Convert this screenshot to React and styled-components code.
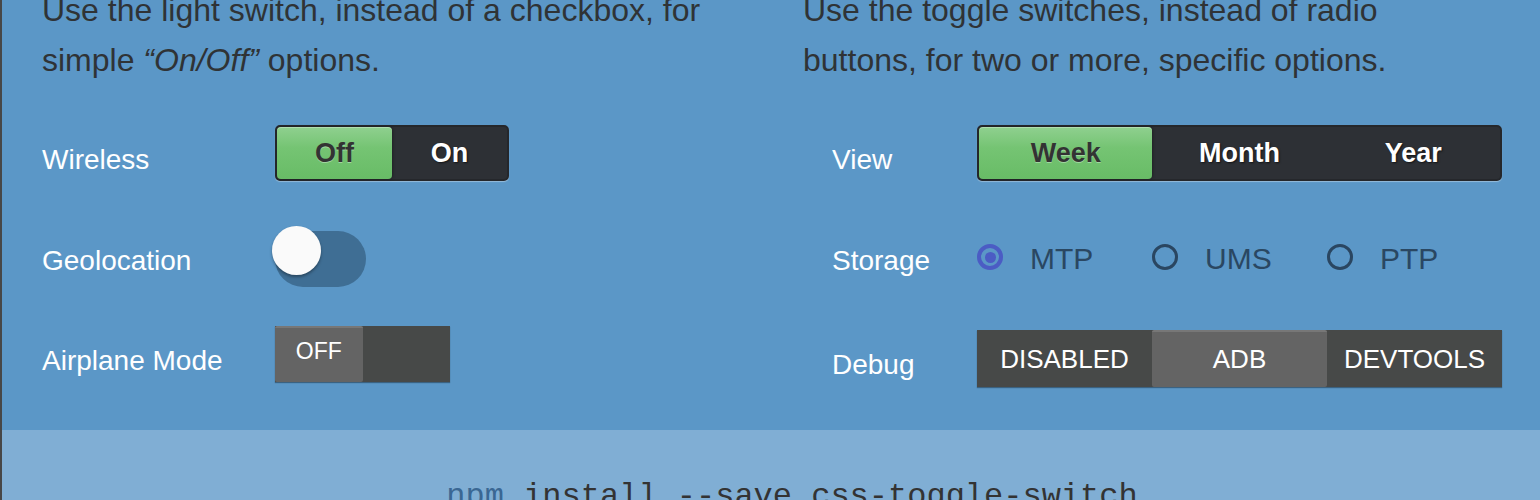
import React, { useState } from 'react';
import styled, { createGlobalStyle } from 'styled-components';

const GlobalStyle = createGlobalStyle`
    html, body {
        margin: 0;
        padding: 0;
        background: #5b97c7;
        overflow: hidden;
    }
    body {
        font-family: "Liberation Sans", Arial, sans-serif;
    }
`;

const Page = styled.div`
    width: 1540px;
    height: 500px;
    box-sizing: border-box;
    border-left: 2px solid #474747;
    display: flex;
    flex-direction: column;
    overflow: hidden;
`;

const Columns = styled.div`
    display: grid;
    grid-template-columns: 801px 1fr;
    height: 430px;
    background: #5b97c7;
    flex-shrink: 0;
`;

const Column = styled.div`
    padding-left: ${p => p.$pad}px;
    display: flex;
    flex-direction: column;
`;

const Lead = styled.p`
    margin: -15px 0 0;
    max-width: ${p => p.$max}px;
    font-size: 32px;
    line-height: 50px;
    color: #2f3336;
    em { font-style: italic; }
`;

const Row = styled.div`
    display: flex;
    align-items: center;
    height: ${p => p.$h || 56}px;
    margin-top: ${p => p.$mt}px;
`;

const Label = styled.div`
    width: ${p => p.$w}px;
    padding-left: ${p => p.$indent || 0}px;
    padding-top: ${p => p.$dy || 0}px;
    box-sizing: border-box;
    font-size: 28px;
    color: #fff;
    flex-shrink: 0;
`;

/* candy style light switch / toggle */
const Candy = styled.div`
    position: relative;
    display: grid;
    grid-template-columns: repeat(${p => p.$count}, 1fr);
    width: ${p => p.$w}px;
    height: 56px;
    box-sizing: border-box;
    border: 2px solid #25272b;
    border-radius: 5px;
    background: #2d3035;
    box-shadow: 0 1px 1px rgba(255, 255, 255, 0.35);
`;

const CandyOption = styled.span`
    position: relative;
    z-index: 1;
    display: flex;
    align-items: center;
    justify-content: center;
    font-size: 27px;
    font-weight: bold;
    color: ${p => (p.$active ? '#333' : '#fff')};
    text-shadow: ${p => (p.$active ? '0 1px rgba(255,255,255,0.35)' : '1px 1px 2px rgba(0,0,0,0.6)')};
    cursor: pointer;
`;

const CandyKnob = styled.span`
    position: absolute;
    top: 0;
    left: 0;
    bottom: 0;
    width: ${p => p.$w};
    border-radius: 4px;
    background: linear-gradient(to bottom, #8fd08f 0%, #75c473 40%, #68bc66 100%);
    box-shadow: inset 0 1px rgba(255, 255, 255, 0.3), 1px 0 3px rgba(0, 0, 0, 0.3);
`;

/* material switch */
const Track = styled.div`
    position: relative;
    width: 91px;
    height: 56px;
    border-radius: 28px;
    background: #3f6e94;
`;

const Thumb = styled.span`
    position: absolute;
    left: -3px;
    top: -5px;
    width: 49px;
    height: 49px;
    border-radius: 50%;
    background: #fafafa;
    box-shadow: 0 2px 3px rgba(0, 0, 0, 0.35);
`;

/* flat "holo" style switch */
const Flat = styled.div`
    display: grid;
    grid-template-columns: repeat(${p => p.$count}, 1fr);
    width: ${p => p.$w}px;
    height: ${p => p.$h}px;
    background: #474948;
    box-shadow: 0 1px 1px rgba(0, 0, 0, 0.35);
`;

const FlatOption = styled.span`
    display: flex;
    align-items: ${p => (p.$top ? 'flex-start' : 'center')};
    justify-content: center;
    padding-top: ${p => (p.$top ? 10 : 0)}px;
    box-sizing: border-box;
    font-size: ${p => p.$fs}px;
    color: #fff;
    background: ${p => (p.$active ? '#646464' : 'transparent')};
    border-top: 2px solid ${p => (p.$active ? '#777' : 'transparent')};
    border-radius: 2px;
    cursor: pointer;
`;

/* radios */
const RadioGroup = styled.div`
    display: grid;
    grid-template-columns: repeat(3, 175px);
`;

const RadioItem = styled.label`
    display: flex;
    align-items: center;
    gap: 27px;
    font-size: 30px;
    color: #2a4762;
    cursor: pointer;
`;

const RadioDot = styled.span`
    width: 26px;
    height: 26px;
    box-sizing: border-box;
    border-radius: 50%;
    margin-top: -4px;
    border: ${p => (p.$checked ? '4px solid #4b5cc4' : '3.5px solid #2a4661')};
    display: flex;
    align-items: center;
    justify-content: center;
    &::after {
        content: '';
        width: 11px;
        height: 11px;
        border-radius: 50%;
        background: ${p => (p.$checked ? '#4b5cc4' : 'transparent')};
    }
`;

const Install = styled.div`
    flex: 1;
    background: #80aed4;
    padding: 51px 0 0 42px;
    text-align: center;
    font-family: "Liberation Mono", "DejaVu Sans Mono", monospace;
    font-size: 32px;
    line-height: 32px;
    color: #333;
    white-space: nowrap;
`;

const Npm = styled.span`
    color: #3a6793;
`;

export default function App() {
    const [view, setView] = useState(0);
    const [storage, setStorage] = useState('MTP');
    const [debug, setDebug] = useState(1);
    const views = ['Week', 'Month', 'Year'];
    const debugs = ['DISABLED', 'ADB', 'DEVTOOLS'];

    return <>
        <GlobalStyle />
        <Page>
            <Columns>
                <Column $pad={40}>
                    <Lead $max={700}>
                        Use the light switch, instead of a checkbox, for simple <em>“On/Off”</em> options.
                    </Lead>
                    <Row $mt={40}>
                        <Label $w={233} $dy={14}>Wireless</Label>
                        <Candy $count={2} $w={234}>
                            <CandyKnob $w="50%" />
                            <CandyOption $active>Off</CandyOption>
                            <CandyOption>On</CandyOption>
                        </Candy>
                    </Row>
                    <Row $mt={50}>
                        <Label $w={233} $dy={4}>Geolocation</Label>
                        <Track>
                            <Thumb />
                        </Track>
                    </Row>
                    <Row $mt={39}>
                        <Label $w={233} $dy={14}>Airplane Mode</Label>
                        <Flat $count={2} $w={175} $h={56}>
                            <FlatOption $active $top $fs={23}>OFF</FlatOption>
                            <FlatOption $fs={23} />
                        </Flat>
                    </Row>
                </Column>
                <Column $pad={0}>
                    <Lead $max={640}>
                        Use the toggle switches, instead of radio buttons, for two or more, specific options.
                    </Lead>
                    <Row $mt={40}>
                        <Label $w={174} $indent={29} $dy={14}>View</Label>
                        <Candy $count={3} $w={525}>
                            <CandyKnob $w="33.2%" style={{ left: `${view * 33.4}%` }} />
                            {views.map((v, i) => (
                                <CandyOption key={v} $active={i === view} onClick={() => setView(i)}>{v}</CandyOption>
                            ))}
                        </Candy>
                    </Row>
                    <Row $mt={50}>
                        <Label $w={174} $indent={29} $dy={4}>Storage</Label>
                        <RadioGroup>
                            {['MTP', 'UMS', 'PTP'].map(s => (
                                <RadioItem key={s} onClick={() => setStorage(s)}>
                                    <RadioDot $checked={storage === s} />
                                    {s}
                                </RadioItem>
                            ))}
                        </RadioGroup>
                    </Row>
                    <Row $mt={43} $h={57}>
                        <Label $w={174} $indent={29} $dy={13}>Debug</Label>
                        <Flat $count={3} $w={525} $h={57}>
                            {debugs.map((d, i) => (
                                <FlatOption key={d} $active={i === debug} $fs={26} onClick={() => setDebug(i)}>{d}</FlatOption>
                            ))}
                        </Flat>
                    </Row>
                </Column>
            </Columns>
            <Install>
                <Npm>npm</Npm> install --save css-toggle-switch
            </Install>
        </Page>
    </>;
}
